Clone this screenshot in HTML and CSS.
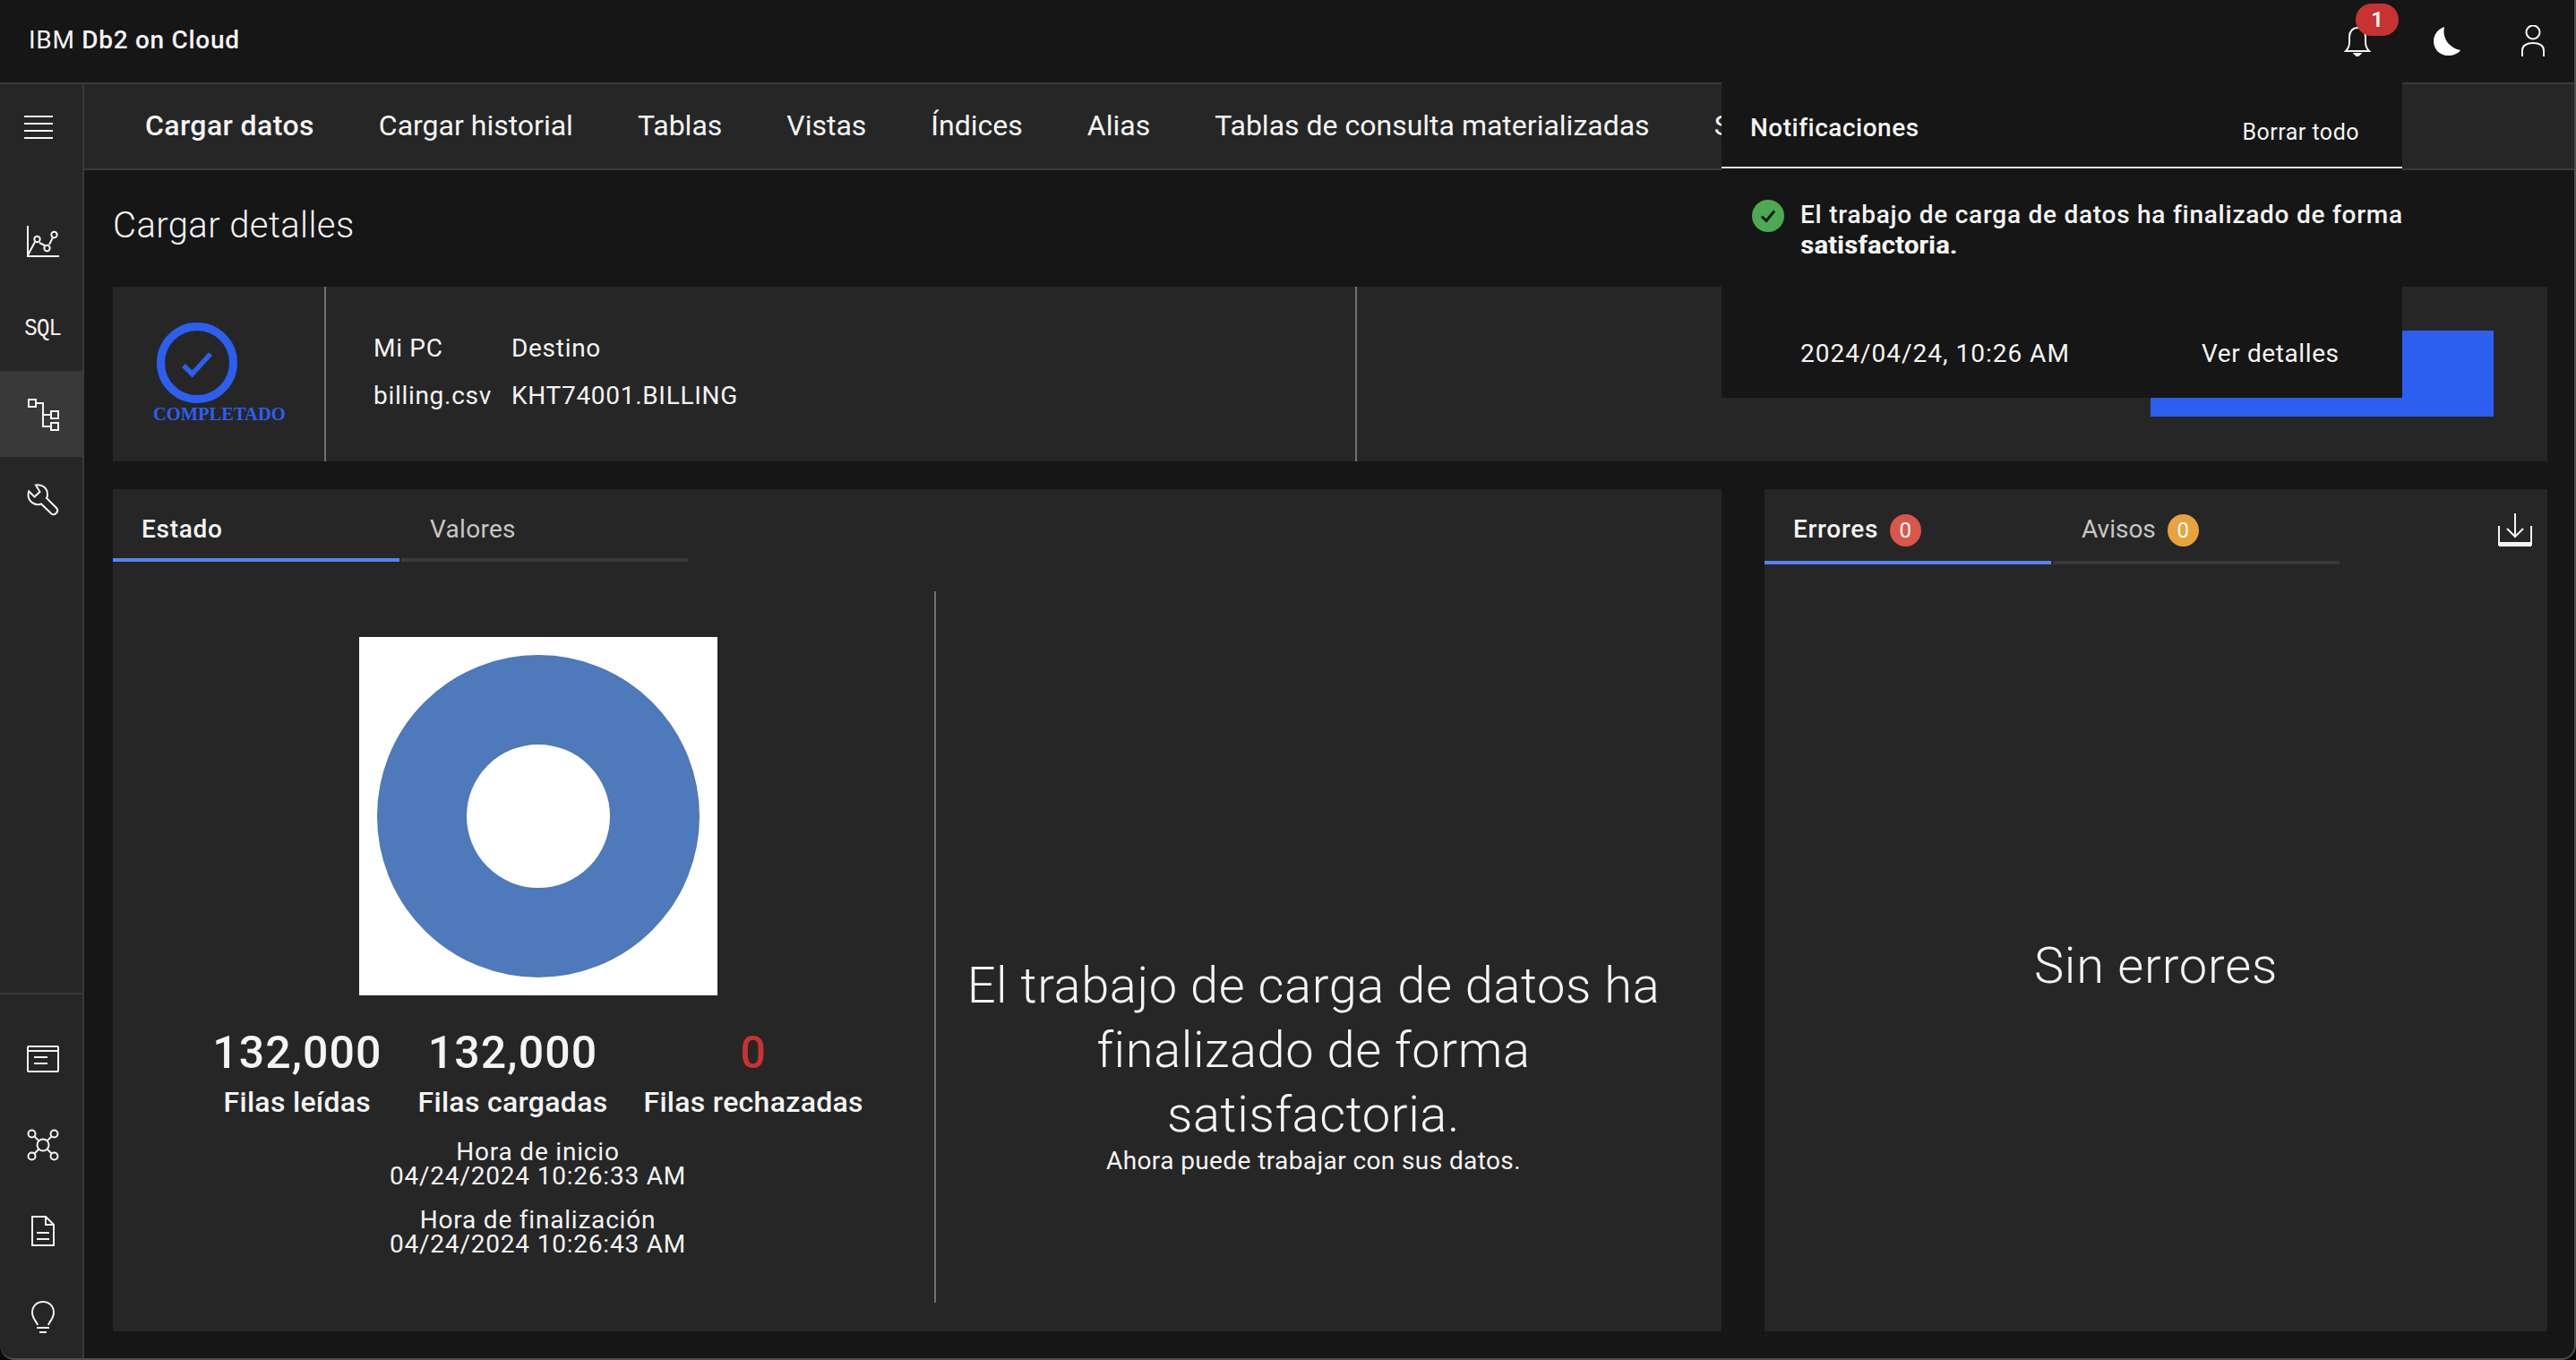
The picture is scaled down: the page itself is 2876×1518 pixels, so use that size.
FILE: index.html
```html
<!DOCTYPE html>
<html lang="es">
<head>
  <meta charset="UTF-8" />
  <title>IBM Db2 on Cloud</title>
  <link rel="stylesheet" href="styles.css">
</head>
<body>
  <div class="app">
    <!-- TOP BAR -->
    <header class="topbar">
      <div class="brand">IBM <b>Db2 on Cloud</b></div>
      <div class="top-icons">
        <div class="bell">
          <svg class="icon-bell" viewBox="0 0 30 34"><path d="M2 28 C5 25 6 23 6 18 V12 C6 6 10 2 15 2 C20 2 24 6 24 12 V18 C24 23 25 25 28 28 Z M12 31 H18 L15 34 Z" /></svg>
          <span class="bell-badge">1</span>
        </div>
        <svg class="icon-moon" viewBox="0 0 30 32"><path d="M12 0 C4 3 0 9 0 16 C0 25 7 32 16 32 C22 32 27 30 30 26 C20 24 9 15 12 0 Z" /></svg>
        <svg class="icon-user" viewBox="0 0 26 35"><circle cx="13" cy="8" r="7.5" /><path d="M1 35 V28 C1 23 6 20 13 20 C20 20 25 23 25 28 V35" /></svg>
      </div>
    </header>

    <div class="shell">
      <!-- LEFT RAIL -->
      <nav class="rail">
        <div>
          <div class="rail-item rail-menu">
            <svg class="icon" viewBox="0 0 36 36"><path d="M2 6 H34 M2 14 H34 M2 22 H34 M2 30 H34" /></svg>
          </div>
          <div class="rail-group">
            <div class="rail-item">
              <svg class="icon" viewBox="0 0 36 36"><path d="M1 0 V34 H36 M1 33 L9 18 M14 19 L20 22 M25 21 L29 13" /><circle cx="11.5" cy="15" r="3.2" /><circle cx="22.5" cy="25" r="3.2" /><circle cx="30.5" cy="10" r="3.2" /></svg>
            </div>
            <div class="rail-item"><span class="sql">SQL</span></div>
            <div class="rail-item active">
              <svg class="icon" viewBox="0 0 36 36"><rect x="1" y="2" width="8" height="8" /><rect x="26" y="15" width="8" height="8" /><rect x="26" y="28" width="8" height="8" /><path d="M9 6 H17 V32 H26 M17 19 H26" /></svg>
            </div>
            <div class="rail-item">
              <svg class="icon" viewBox="0 0 36 36"><path d="M10 1.5 C17 0 23 5 23 12 C23 13.500 22.700 15 22 16 L33.500 27.500 C36 31 31 36 27.500 33.500 L16 22.500 C9 25 1.500 20 1.500 12 C1.500 10.500 1.800 9.500 2.200 8.300 L8.500 14.500 L14.500 9 Z" /></svg>
            </div>
          </div>
        </div>
        <div class="rail-bottom">
          <div class="rail-item">
            <svg class="icon" viewBox="0 0 36 36"><rect x="1" y="4" width="34" height="28" rx="1" /><path d="M1 9 H35 M8 16 H23 M8 23 H23" /></svg>
          </div>
          <div class="rail-item">
            <svg class="icon" viewBox="0 0 36 36"><circle cx="18" cy="18" r="6.500" /><circle cx="5.500" cy="5.500" r="4" /><circle cx="30.500" cy="5.500" r="4" /><circle cx="5.500" cy="30.500" r="4" /><circle cx="30.500" cy="30.500" r="4" /><path d="M8.500 8.500 L13.500 13.500 M27.500 8.500 L22.500 13.500 M8.500 27.500 L13.500 22.500 M27.500 27.500 L22.500 22.500" /></svg>
          </div>
          <div class="rail-item">
            <svg class="icon" viewBox="0 0 36 36"><path d="M6 2 H21 L30 11 V34 H6 Z M21 2 V11 H30 M11 20 H25 M11 27 H25" /></svg>
          </div>
          <div class="rail-item">
            <svg class="icon" viewBox="0 0 36 36"><path d="M12 27 C11 23 6 20 6 13 C6 6 11 1 18 1 C25 1 30 6 30 13 C30 20 25 23 24 27 M11 30 H25 M14 35 H22" /></svg>
          </div>
        </div>
      </nav>

      <main class="main">
        <!-- SUB NAV -->
        <div class="subnav">
          <a class="subnav-item current">Cargar datos</a>
          <a class="subnav-item">Cargar historial</a>
          <a class="subnav-item">Tablas</a>
          <a class="subnav-item">Vistas</a>
          <a class="subnav-item">Índices</a>
          <a class="subnav-item">Alias</a>
          <a class="subnav-item">Tablas de consulta materializadas</a>
          <a class="subnav-item">Secuencias</a>
        </div>

        <div class="content">
          <h1 class="page-title">Cargar detalles</h1>

          <!-- SUMMARY CARD -->
          <section class="summary">
            <div class="status-cell">
              <svg class="status-icon" viewBox="0 0 90 90"><circle cx="45" cy="45" r="40.500" /><path d="M30 48 L39.500 57.500 L60 35" /></svg>
              <div class="status-text">COMPLETADO</div>
            </div>
            <div class="info-cell">
              <span>Mi PC</span><span>Destino</span>
              <span>billing.csv</span><span>KHT74001.BILLING</span>
            </div>
            <div class="action-cell">
              <button class="primary-btn"></button>
            </div>
          </section>

          <div class="panels">
            <!-- STATE PANEL -->
            <section class="panel">
              <div class="tabs">
                <div class="tab selected">Estado</div>
                <div class="tab">Valores</div>
              </div>
              <div class="state-body">
                <div class="state-left">
                  <div class="donut-box"><div class="donut"></div></div>
                  <div class="stats">
                    <div class="stat"><div class="stat-num">132,000</div><div class="stat-label">Filas leídas</div></div>
                    <div class="stat"><div class="stat-num">132,000</div><div class="stat-label">Filas cargadas</div></div>
                    <div class="stat"><div class="stat-num zero">0</div><div class="stat-label">Filas rechazadas</div></div>
                  </div>
                  <div class="times">Hora de inicio<br>04/24/2024 10:26:33 AM</div>
                  <div class="times">Hora de finalización<br>04/24/2024 10:26:43 AM</div>
                </div>
                <div class="state-right">
                  <div class="big-msg">El trabajo de carga de datos ha<br>finalizado de forma<br>satisfactoria.</div>
                  <div class="sub-msg">Ahora puede trabajar con sus datos.</div>
                </div>
              </div>
            </section>

            <!-- ERRORS PANEL -->
            <section class="panel errors-panel">
              <div class="tabs">
                <div class="tab selected">Errores <span class="count red">0</span></div>
                <div class="tab">Avisos <span class="count orange">0</span></div>
                <svg class="icon-download" viewBox="0 0 38 37"><path class="thin" d="M19 0 V26 M10 17 L19 26 L28 17" /><path class="thin" d="M1 14 V35 H37 V14" /><path class="tray" d="M1 32 H37 V37 H1 Z" /></svg>
              </div>
              <div class="errors-body">Sin errores</div>
            </section>
          </div>
        </div>
      </main>
    </div>

    <!-- NOTIFICATIONS DROPDOWN -->
    <aside class="notif">
      <div class="notif-head">
        <span class="notif-title">Notificaciones</span>
        <span class="notif-clear">Borrar todo</span>
      </div>
      <div class="notif-row">
        <svg class="notif-check" viewBox="0 0 36 36"><circle cx="18" cy="18" r="18" /><path d="M11 18.500 L16 23.500 L25 12.500" /></svg>
        <div class="notif-msg">El trabajo de carga de datos ha finalizado de forma<br><span class="ghost">satisfactoria.</span></div>
      </div>
      <div class="notif-foot">
        <span class="notif-date">2024/04/24, 10:26 AM</span>
        <span>Ver detalles</span>
      </div>
    </aside>
  </div>
</body>
</html>
```

FILE: styles.css
```css
* {
  box-sizing: border-box;
}
html, body {
  margin: 0;
  height: 100%;
  background: #0a0606;
}
body {
  font-family: "Roboto", "Liberation Sans", sans-serif;
  color: #f4f4f4;
  overflow: hidden;
}

.app {
  position: relative;
  height: 100vh;
  display: flex;
  flex-direction: column;
  background: #161616;
  border-radius: 0 0 16px 16px;
  overflow: hidden;
}
/* window edge */
.app::after {
  content: "";
  position: absolute;
  top: 0; left: 0; right: 0; bottom: 0;
  border-right: 2px solid #4f4f4f;
  border-bottom: 2px solid #4f4f4f;
  border-radius: 0 0 16px 16px;
  pointer-events: none;
}

/* Top bar */
.topbar {
  height: 94px;
  flex-shrink: 0;
  display: flex;
  align-items: center;
  justify-content: space-between;
  background: #161616;
  border-bottom: 2px solid #393939;
  padding: 0 35px 4px 32px;
}
.brand {
  font-size: 28px;
  font-weight: 400;
  letter-spacing: .7px;
}
.brand b {
  font-weight: 500;
}
.top-icons {
  display: flex;
  align-items: center;
}
.bell {
  position: relative;
  width: 30px;
  height: 34px;
  margin-top: 4px;
  margin-right: 70px;
}
.icon-bell {
  display: block;
  width: 30px;
  height: 34px;
  fill: none;
  stroke: #f4f4f4;
  stroke-width: 2;
}
.bell-badge {
  position: absolute;
  left: 13px;
  top: -25px;
  width: 48px;
  height: 36px;
  border-radius: 18px;
  background: #c83232;
  color: #fff;
  font-size: 24px;
  font-weight: 600;
  line-height: 36px;
  text-align: center;
}
.icon-moon {
  width: 30px;
  height: 32px;
  fill: #fff;
  margin-top: 4px;
  margin-right: 68px;
}
.icon-user {
  width: 26px;
  height: 35px;
  fill: none;
  stroke: #f4f4f4;
  stroke-width: 2;
  margin-top: 2px;
}

.shell {
  flex: 1;
  display: flex;
  min-height: 0;
}

/* Left rail */
.rail {
  width: 94px;
  flex-shrink: 0;
  display: flex;
  flex-direction: column;
  justify-content: space-between;
  background: #262626;
  border-right: 2px solid #393939;
}
.rail-item {
  height: 96px;
  display: flex;
  align-items: center;
  justify-content: center;
  padding-left: 4px;
}
.rail-item.active {
  background: #393939;
  margin-right: -2px;
}
.rail-menu {
  padding-right: 6px;
  padding-left: 0;
}
.rail-group {
  margin-top: 32px;
}
.rail-bottom {
  border-top: 2px solid #393939;
  padding-top: 24px;
}
.icon {
  width: 36px;
  height: 36px;
  fill: none;
  stroke: #f4f4f4;
  stroke-width: 2;
  overflow: visible;
}
.sql {
  font-family: "Liberation Mono", monospace;
  font-size: 28px;
  font-weight: 400;
  letter-spacing: -1px;
  transform: scaleX(.86);
}

.main {
  flex: 1;
  min-width: 0;
  display: flex;
  flex-direction: column;
}

/* Sub navigation */
.subnav {
  height: 96px;
  flex-shrink: 0;
  display: flex;
  align-items: center;
  padding: 0 0 2px 32px;
  background: #262626;
  border-bottom: 2px solid #393939;
  overflow: hidden;
  white-space: nowrap;
}
.subnav-item {
  padding: 0 36px;
  font-size: 32px;
  font-weight: 400;
  color: #f4f4f4;
}
.subnav-item.current {
  font-weight: 500;
  letter-spacing: .4px;
}

.content {
  flex: 1;
  min-height: 0;
  display: flex;
  flex-direction: column;
  padding: 0 32px 32px;
}
.page-title {
  height: 130px;
  flex-shrink: 0;
  margin: 0;
  padding-top: 37px;
  font-size: 40px;
  line-height: 50px;
  font-weight: 300;
  letter-spacing: .4px;
}

/* Summary card */
.summary {
  height: 195px;
  flex-shrink: 0;
  display: flex;
  background: #262626;
  font-size: 28px;
  font-weight: 400;
}
.status-cell {
  position: relative;
  width: 238px;
  flex-shrink: 0;
  border-right: 2px solid #6f6f6f;
}
.status-icon {
  display: block;
  width: 90px;
  height: 90px;
  margin: 40px 0 0 49px;
  fill: none;
  stroke: #2c5ff0;
}
.status-icon circle {
  stroke-width: 9;
}
.status-icon path {
  stroke-width: 5.500;
}
.status-text {
  margin: 0 0 0 45px;
  font-family: "Liberation Serif", serif;
  font-size: 20.500px;
  line-height: 24px;
  font-weight: 700;
  color: #2c5ff0;
}
.info-cell {
  width: 1151px;
  flex-shrink: 0;
  display: grid;
  grid-template-columns: 154px 1fr;
  grid-auto-rows: 53px;
  align-content: center;
  padding: 14px 0 0 53px;
  letter-spacing: .7px;
  border-right: 2px solid #6f6f6f;
}
.action-cell {
  flex: 1;
  display: flex;
  justify-content: flex-end;
  padding: 49px 60px 0 0;
}
.primary-btn {
  width: 383px;
  height: 96px;
  border: none;
  background: #2c5ff0;
}

/* Bottom panels */
.panels {
  flex: 1;
  min-height: 0;
  margin-top: 31px;
  display: grid;
  grid-template-columns: 1796px 874px;
  gap: 48px;
}
.panel {
  display: flex;
  flex-direction: column;
  min-height: 0;
  background: #262626;
}
.tabs {
  position: relative;
  display: flex;
  flex-shrink: 0;
  gap: 2px;
}
.tab {
  width: 320px;
  height: 81px;
  display: flex;
  align-items: center;
  gap: 13px;
  padding: 11px 0 0 32px;
  border-bottom: 4px solid #393939;
  font-size: 28px;
  font-weight: 400;
  letter-spacing: .3px;
  color: #c6c6c6;
}
.errors-panel .tab {
  height: 84px;
  padding-top: 8px;
  letter-spacing: 0;
}
.tab.selected,
.errors-panel .tab.selected {
  border-bottom-color: #5585f0;
  font-weight: 500;
  letter-spacing: .7px;
  color: #f4f4f4;
}
.count {
  width: 35px;
  height: 36px;
  margin-top: 4px;
  border-radius: 50%;
  font-size: 24px;
  font-weight: 400;
  line-height: 36px;
  text-align: center;
  color: #fff;
}
.red {
  background: #d9574a;
}
.orange {
  background: #e8a33d;
}
.icon-download {
  position: absolute;
  right: 17px;
  top: 27px;
  width: 38px;
  height: 37px;
  fill: none;
}
.icon-download .thin {
  stroke: #f4f4f4;
  stroke-width: 2;
}
.icon-download .tray {
  fill: #f4f4f4;
}

.state-body {
  flex: 1;
  min-height: 0;
  display: flex;
  padding: 33px 0 32px;
}
.state-left {
  width: 919px;
  flex-shrink: 0;
  display: flex;
  flex-direction: column;
  align-items: center;
  padding: 51px 0 0 32px;
  border-right: 2px solid #6f6f6f;
}
.donut-box {
  width: 400px;
  height: 400px;
  flex-shrink: 0;
  display: flex;
  align-items: center;
  justify-content: center;
  background: #fff;
}
.donut {
  width: 360px;
  height: 360px;
  border-radius: 50%;
  border: 100px solid #4e79ba;
  background: #fff;
}
.stats {
  display: flex;
  gap: 40px;
  margin-top: 36px;
  text-align: center;
  font-weight: 500;
}
.stat-num {
  font-size: 50px;
  line-height: 56px;
  font-weight: 500;
  letter-spacing: 1.100px;
}
.stat-num.zero {
  color: #c83232;
}
.stat-label {
  margin-top: 7px;
  font-size: 32px;
  line-height: 40px;
  letter-spacing: .3px;
}
.times {
  margin-top: 22px;
  font-size: 28px;
  font-weight: 400;
  line-height: 27px;
  letter-spacing: .8px;
  text-align: center;
}
.state-right {
  flex: 1;
  padding: 404px 34px 0 0;
  text-align: center;
}
.big-msg {
  font-size: 56px;
  line-height: 72px;
  font-weight: 300;
  letter-spacing: .6px;
}
.sub-msg {
  margin-top: 0;
  font-size: 28px;
  line-height: 32px;
  font-weight: 400;
  letter-spacing: .4px;
}
.errors-body {
  flex: 1;
  display: flex;
  align-items: center;
  justify-content: center;
  padding-top: 40px;
  font-size: 56px;
  font-weight: 300;
  letter-spacing: .8px;
}

/* Notifications dropdown */
.notif {
  position: absolute;
  left: 1922px;
  top: 92px;
  width: 760px;
  height: 352px;
  background: #161616;
  overflow: hidden;
}
.notif-head {
  height: 96px;
  display: flex;
  justify-content: space-between;
  border-bottom: 2px solid #e0e0e0;
  padding: 32px 48px 0 32px;
}
.notif-title {
  font-size: 28px;
  line-height: 38px;
  font-weight: 500;
  letter-spacing: .5px;
}
.notif-clear {
  margin-top: 5px;
  font-size: 25px;
  line-height: 38px;
  font-weight: 400;
  letter-spacing: .5px;
}
.notif-row {
  display: flex;
  gap: 18px;
  padding: 34px 0 0 34px;
}
.notif-check {
  width: 36px;
  height: 36px;
  flex-shrink: 0;
  margin-top: 1px;
}
.notif-check circle {
  fill: #4caa52;
}
.notif-check path {
  fill: none;
  stroke: #161616;
  stroke-width: 3;
}
.notif-msg {
  font-size: 28px;
  line-height: 36px;
  font-weight: 500;
  letter-spacing: .75px;
  white-space: nowrap;
}
.ghost {
  text-shadow: 1px 0 0 #f4f4f4;
  position: relative;
  top: -2px;
}
.notif-foot {
  display: flex;
  padding: 83px 0 0 88px;
  font-size: 28px;
  line-height: 36px;
  font-weight: 400;
  letter-spacing: .6px;
}
.notif-date {
  width: 448px;
  letter-spacing: 1px;
}
```
